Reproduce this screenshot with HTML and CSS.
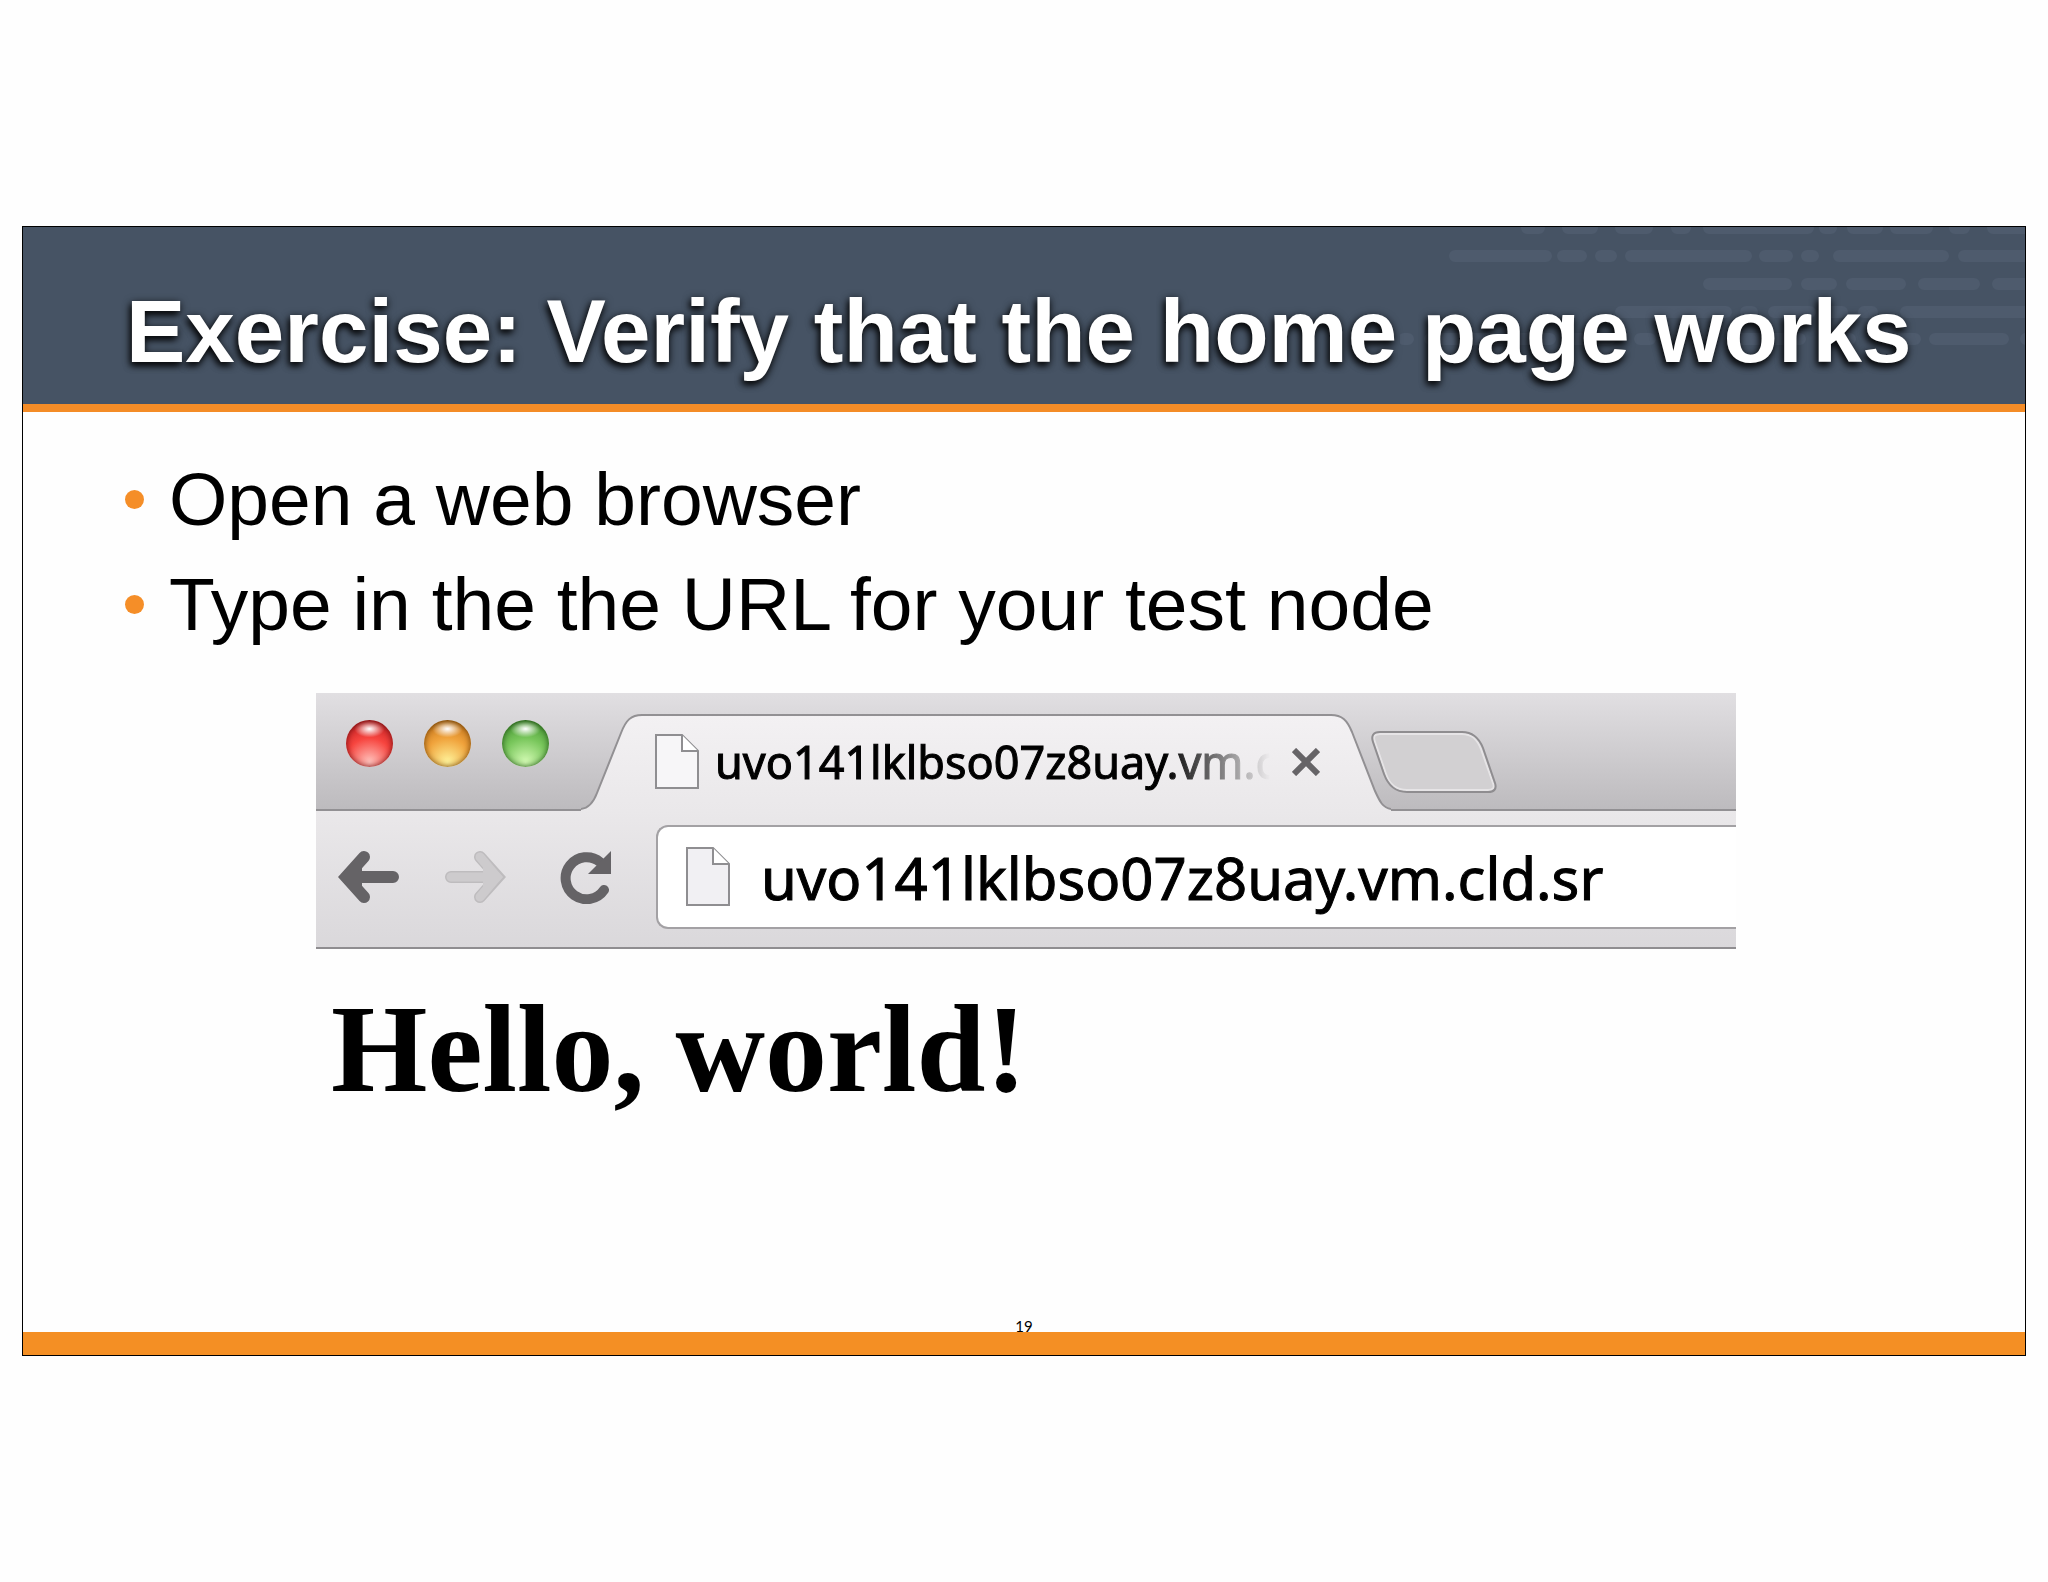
FILE: index.html
```html
<!DOCTYPE html>
<html lang="en">
<head>
<meta charset="utf-8">
<title>Exercise: Verify that the home page works</title>
<link rel="stylesheet" href="styles.css">
</head>
<body>
<main class="slide">
  <header class="slide-header">
    <svg class="pattern" viewBox="0 0 625 130" aria-hidden="true">
      <g class="dashes">
        <path d="M127 1H139M168 1H192M221 1H247M277 1H285M309 1H408M425 1H431M453 1H477M496 1H527M555 1H564M593 1H640"/>
        <path d="M55 29H146M163 29H181M201 29H211M231 29H346M365 29H387M407 29H413M439 29H543M564 29H640"/>
        <path d="M309 57H386M407 57H431M452 57H500M524 57H574M598 57H640"/>
        <path d="M221 85H326M346 85H352M374 85H410M430 85H442M464 85H472M506 85H640"/>
        <path d="M4 112H8M30 112H150M170 112H210M240 112H250M330 112H400M430 112H450M485 112H515M535 112H603M626 112H640"/>
      </g>
    </svg>
    <h1 class="title">Exercise: Verify that the home page works</h1>
  </header>
  <section class="content">
    <ul class="steps">
      <li>Open a web browser</li>
      <li>Type in the the URL for your test node</li>
    </ul>
    <div class="browser">
      <div class="tab-strip">
        <div class="lights">
          <button class="light red" aria-label="Close window"></button>
          <button class="light amber" aria-label="Minimize window"></button>
          <button class="light green" aria-label="Zoom window"></button>
        </div>
        <div class="tab">
          <svg class="tab-shape" viewBox="0 0 810 98" aria-hidden="true">
            <defs><linearGradient id="tabFill" x1="0" y1="0" x2="0" y2="1"><stop offset="0" stop-color="#f3f1f3"/><stop offset="1" stop-color="#eae8ea"/></linearGradient></defs>
            <path fill="url(#tabFill)" d="M0 98V96C9 95 13 88 16 80L40 20C45 7 50 2 61 2H750C761 2 766 7 771 19L794 78C799 89 802 95 810 96V98Z"/>
            <path fill="none" stroke="#929093" stroke-width="2" d="M0 96C9 95 13 88 16 80L40 20C45 7 50 2 61 2H750C761 2 766 7 771 19L794 78C799 89 802 95 810 96"/>
          </svg>
          <svg class="page-icon" viewBox="0 0 44 56" aria-hidden="true"><path fill="#f7f6f8" stroke="#8f8e91" stroke-width="2" d="M1 1H27L43 17V54H1Z"/><path fill="#fff" stroke="#8f8e91" stroke-width="2" d="M27 1V17H43"/></svg>
          <span class="tab-title">uvo141lklbso07z8uay.vm.cld.sr</span>
          <button class="tab-close" aria-label="Close tab"><svg viewBox="0 0 28 28"><path stroke="#666467" stroke-width="6" d="M2 2L26 26M26 2L2 26"/></svg></button>
        </div>
        <button class="new-tab" aria-label="New tab"><svg viewBox="0 0 126 64"><path fill="#d2d0d2" stroke="#e6e4e6" stroke-width="2" d="M9 4H91C101 4 106 9 110 19L122 53C124 58 122 60 117 60H36C25 60 19 55 15 44L4 12C2 7 3 4 9 4Z"/><path fill="none" stroke="#8f8d90" stroke-width="2" d="M9 2H91C102 2 108 8 112 18L124 53C126 59 123 62 117 62H36C24 62 17 55 13 44L2 12C0 6 2 2 9 2Z"/></svg></button>
      </div>
      <div class="toolbar">
        <button class="nav" aria-label="Back"><svg viewBox="0 0 62 54"><path fill="none" stroke="#656366" stroke-width="12" stroke-linecap="round" d="M12 27H55M26 7L8 27L26 47"/><path fill="#656366" d="M1 27L24 3V51Z"/></svg></button>
        <button class="nav" aria-label="Forward" disabled><svg viewBox="0 0 62 54"><path fill="none" stroke="#bebcbe" stroke-width="12" stroke-linecap="round" d="M7 27H50M36 7L54 27L36 47"/><path fill="none" stroke="#cdcbcd" stroke-width="9" stroke-linecap="round" d="M7 27H50M36 7L53 27L36 47"/><path fill="#cdcbcd" d="M59 27L39 6V48Z"/></svg></button>
        <button class="nav reload" aria-label="Reload"><svg viewBox="0 0 54 54"><path fill="none" stroke="#656366" stroke-width="10" stroke-linecap="round" d="M46 40A21 21 0 1 1 42 12"/><path fill="#656366" d="M53 1V24H30Z"/></svg></button>
        <label class="address">
          <svg class="page-icon" viewBox="0 0 44 60" aria-hidden="true"><path fill="#f1f0f3" stroke="#8f8e91" stroke-width="2" d="M1 1H27L43 17V58H1Z"/><path fill="#fff" stroke="#8f8e91" stroke-width="2" d="M27 1V17H43"/></svg>
          <input type="text" aria-label="Address" value="uvo141lklbso07z8uay.vm.cld.sr">
        </label>
      </div>
      <h2 class="hello">Hello, world!</h2>
    </div>
  </section>
  <footer class="slide-footer"><span class="page-number">19</span></footer>
</main>
</body>
</html>
```
FILE: styles.css
```css
* { box-sizing: border-box; }
body { margin: 0; background: #fefefe; color: #000; font-family: "Liberation Sans", Arial, sans-serif; }
button { padding: 0; border: 0; background: none; }
svg { display: block; }

.slide { display: flex; flex-direction: column; min-height: 1130px; margin: 226px 22px; border: 1px solid #000; background: #fefefe; }
.slide-header { position: relative; padding: 54px 103px 22px; border-bottom: 8px solid #f48c27; background: #465364; }
.pattern { position: absolute; top: 0; right: 0; width: 625px; height: 130px; }
.dashes { fill: none; stroke: #4e5b6d; stroke-width: 12; stroke-linecap: round; }
.title { position: relative; margin: 0; color: #fff; font-size: 89px; line-height: 101px; font-weight: bold; white-space: nowrap; text-shadow: -2px 4px 6px rgba(0, 0, 0, .75), 0 2px 8px rgba(0, 0, 0, .7); }

.content { flex: 1; padding: 35px 0 0; }
.steps { margin: 0; padding: 0 102px; list-style: none; }
.steps li { display: flex; align-items: center; gap: 25px; font-size: 75px; line-height: 105px; }
.steps li::before { content: ""; width: 19px; height: 19px; border-radius: 50%; background: #f58e28; }

.browser { margin: 36px 289px 0 293px; }
.tab-strip { display: flex; height: 118px; border-bottom: 2px solid #929093; background: linear-gradient(#e1dfe2, #bdbbbe); }
.lights { display: flex; gap: 31px; padding: 27px 0 0 30px; }
.light { width: 47px; height: 47px; border-radius: 50%; }
.red { background: radial-gradient(ellipse 32% 18% at 50% 19%, #fff, transparent), radial-gradient(circle at 50% 90%, #ffc3bd, #f7453f 50%, #d9302f 72%, #8f1519 95%); box-shadow: inset 0 0 6px #761012; }
.amber { background: radial-gradient(ellipse 32% 18% at 50% 19%, #fff, transparent), radial-gradient(circle at 50% 90%, #fff49b, #f0a33c 50%, #d98a2a 72%, #8a520b 95%); box-shadow: inset 0 0 6px #744409; }
.green { background: radial-gradient(ellipse 32% 18% at 50% 19%, #fff, transparent), radial-gradient(circle at 50% 90%, #d4fbb4, #78c65b 50%, #5dab45 72%, #2b6a1b 95%); box-shadow: inset 0 0 6px #245718; }
.tab { position: relative; display: flex; align-items: center; height: 98px; margin: 20px 0 0 32px; padding: 0 71px 0 74px; width: 810px; }
.tab-shape { position: absolute; inset: 0; width: 810px; height: 98px; }
.tab > :not(.tab-shape) { position: relative; }
.page-icon { flex: none; width: 44px; }
.tab-title { flex: 1; margin-left: 16px; overflow: hidden; font: 45px/60px "Noto Sans", sans-serif; white-space: nowrap; -webkit-text-stroke: 1px #000; -webkit-mask-image: linear-gradient(90deg, #000 450px, transparent 555px); mask-image: linear-gradient(90deg, #000 450px, transparent 555px); }
.tab-close { width: 28px; height: 28px; margin-left: 20px; }
.new-tab { width: 126px; height: 64px; margin: 37px 0 0 -20px; }

.toolbar { display: flex; align-items: center; height: 138px; padding: 0 0 4px 22px; border-bottom: 2px solid #8f8d90; background: linear-gradient(#eae8ea, #dad8db); }
.nav { width: 62px; margin-right: 44px; }
.reload { width: 54px; margin-left: 8px; }
.address { flex: 1; display: flex; align-items: center; gap: 31px; height: 104px; padding-left: 28px; border: 2px solid #a3a1a4; border-right: 0; border-radius: 12px 0 0 12px; background: #fff; }
.address input { flex: 1; min-width: 0; height: 80px; padding: 0; border: 0; background: none; color: #000; font: 58px "Noto Sans", sans-serif; -webkit-text-stroke: 1px #000; }
.hello { margin: 29px 0 0 15px; font: bold 124px/144px "Liberation Serif", "Times New Roman", serif; }

.slide-footer { display: flex; justify-content: center; height: 23px; background: #f48f24; }
.page-number { height: 18px; margin-top: -15px; font: 15px/18px Lato, sans-serif; }
```
